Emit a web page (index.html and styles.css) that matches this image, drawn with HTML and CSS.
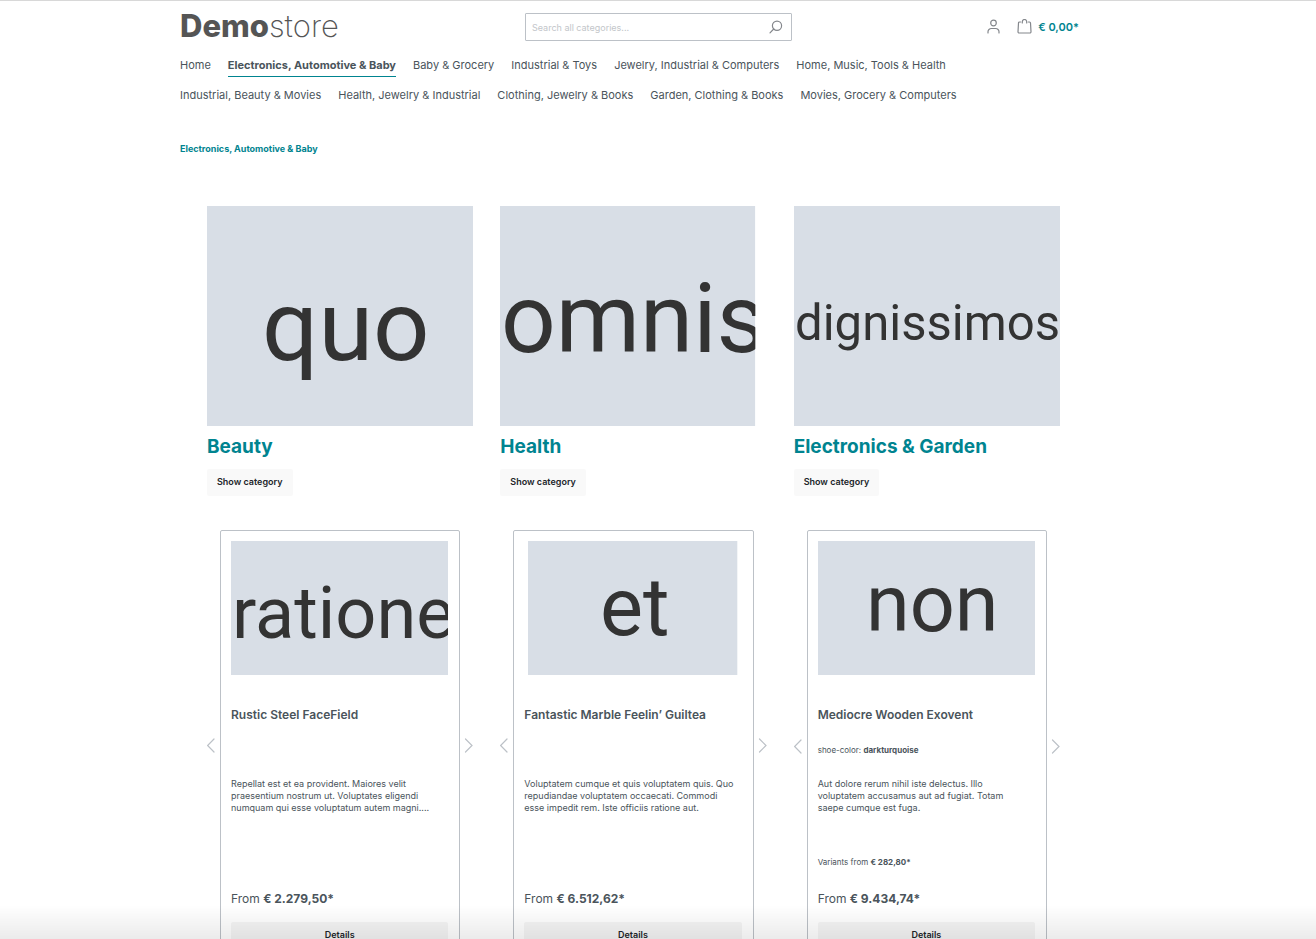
FILE: index.html
```html
<!DOCTYPE html>
<html lang="en">
<head>
<meta charset="utf-8">
<title>Demostore</title>
<link rel="stylesheet" href="styles.css">
</head>
<body>
<div class="page">
  <header class="header">
    <a class="logo" href="#"><b>Demo</b>store</a>
    <form class="search">
      <input class="search-input" type="search" placeholder="Search all categories..." aria-label="Search all categories">
      <button class="search-button" type="button" aria-label="Search">
        <svg width="14" height="14" viewBox="0 0 14 14"><circle cx="8" cy="5.7" r="4.6"/><path d="M4.7 9 1 12.8"/></svg>
      </button>
    </form>
    <div class="actions">
      <button class="icon-button" type="button" aria-label="Your account">
        <svg width="13" height="15" viewBox="0 0 13 15"><circle cx="6.5" cy="4" r="2.800"/><path d="M1 14v-1.200A3.300 3.300 0 0 1 4.300 9.500h4.400A3.300 3.300 0 0 1 12 12.800V14"/></svg>
      </button>
      <a class="cart" href="#">
        <svg width="15" height="15" viewBox="0 0 15 15"><path d="M3.600 3H2.500a1 1 0 0 0-1 1L1 12.700a1.200 1.200 0 0 0 1.200 1.300h10.600a1.200 1.200 0 0 0 1.200-1.300L13.500 4a1 1 0 0 0-1-1h-1.100M5.300 4V2.700a2.200 2.200 0 0 1 4.400 0V4"/></svg>
        <span>€ 0,00*</span>
      </a>
    </div>
  </header>

  <nav class="nav" aria-label="Categories">
    <a href="#">Home</a>
    <a class="active" href="#">Electronics, Automotive &amp; Baby</a>
    <a href="#">Baby &amp; Grocery</a>
    <a href="#">Industrial &amp; Toys</a>
    <a href="#">Jewelry, Industrial &amp; Computers</a>
    <a href="#">Home, Music, Tools &amp; Health</a>
    <a href="#">Industrial, Beauty &amp; Movies</a>
    <a href="#">Health, Jewelry &amp; Industrial</a>
    <a href="#">Clothing, Jewelry &amp; Books</a>
    <a href="#">Garden, Clothing &amp; Books</a>
    <a href="#">Movies, Grocery &amp; Computers</a>
  </nav>

  <a class="breadcrumb" href="#">Electronics, Automotive &amp; Baby</a>

  <main>
    <section class="grid categories">
      <article>
        <svg class="picture" viewBox="0 0 266 220"><rect width="266" height="220"/><text x="55" y="154" font-size="99">quo</text></svg>
        <h2><a href="#">Beauty</a></h2>
        <button class="button" type="button">Show category</button>
      </article>
      <article>
        <svg class="picture" viewBox="0 0 266 220"><svg width="255" height="220"><rect width="255" height="220"/><text x="1" y="146" font-size="96">omnis</text></svg></svg>
        <h2><a href="#">Health</a></h2>
        <button class="button" type="button">Show category</button>
      </article>
      <article>
        <svg class="picture" viewBox="0 0 266 220"><rect width="266" height="220"/><text x="1" y="134" font-size="49">dignissimos</text></svg>
        <h2><a href="#">Electronics &amp; Garden</a></h2>
        <button class="button" type="button">Show category</button>
      </article>
    </section>

    <section class="grid products">
      <div class="slider">
        <button class="arrow" type="button" aria-label="Previous"><svg width="9" height="15" viewBox="0 0 9 15"><path d="M7 1 .6 7.500 7 14"/></svg></button>
        <article class="card">
          <svg class="picture" viewBox="0 0 217 134"><rect width="217" height="134"/><text x="1" y="97" font-size="72">ratione</text></svg>
          <h3>Rustic Steel FaceField</h3>
          <p class="variant"></p>
          <p class="description">Repellat est et ea provident. Maiores velit<br>praesentium nostrum ut. Voluptates eligendi<br>numquam qui esse voluptatum autem magni....</p>
          <p class="from"></p>
          <p class="price">From <b>€ 2.279,50*</b></p>
          <button class="button details" type="button">Details</button>
        </article>
        <button class="arrow next" type="button" aria-label="Next"><svg width="9" height="15" viewBox="0 0 9 15"><path d="m1.500 1 6.500 6.500L1.500 14"/></svg></button>
      </div>
      <div class="slider">
        <button class="arrow" type="button" aria-label="Previous"><svg width="9" height="15" viewBox="0 0 9 15"><path d="M7 1 .6 7.500 7 14"/></svg></button>
        <article class="card">
          <svg class="picture" viewBox="0 0 217 134"><rect x="4" width="209" height="134"/><text x="76" y="94" font-size="81">et</text></svg>
          <h3>Fantastic Marble Feelin’ Guiltea</h3>
          <p class="variant"></p>
          <p class="description">Voluptatem cumque et quis voluptatem quis. Quo<br>repudiandae voluptatem occaecati. Commodi<br>esse impedit rem. Iste officiis ratione aut.</p>
          <p class="from"></p>
          <p class="price">From <b>€ 6.512,62*</b></p>
          <button class="button details" type="button">Details</button>
        </article>
        <button class="arrow next" type="button" aria-label="Next"><svg width="9" height="15" viewBox="0 0 9 15"><path d="m1.500 1 6.500 6.500L1.500 14"/></svg></button>
      </div>
      <div class="slider slider-tall">
        <button class="arrow" type="button" aria-label="Previous"><svg width="9" height="15" viewBox="0 0 9 15"><path d="M7 1 .6 7.500 7 14"/></svg></button>
        <article class="card">
          <svg class="picture" viewBox="0 0 217 134"><rect width="217" height="134"/><text x="48" y="90" font-size="79">non</text></svg>
          <h3>Mediocre Wooden Exovent</h3>
          <p class="variant">shoe-color: <b>darkturquoise</b></p>
          <p class="description">Aut dolore rerum nihil iste delectus. Illo<br>voluptatem accusamus aut ad fugiat. Totam<br>saepe cumque est fuga.</p>
          <p class="from">Variants from <b>€ 282,80*</b></p>
          <p class="price">From <b>€ 9.434,74*</b></p>
          <button class="button details" type="button">Details</button>
        </article>
        <button class="arrow next" type="button" aria-label="Next"><svg width="9" height="15" viewBox="0 0 9 15"><path d="m1.500 1 6.500 6.500L1.500 14"/></svg></button>
      </div>
    </section>
  </main>
</div>
<div class="bottom-shade"></div>
</body>
</html>
```
FILE: styles.css
```css
* {
  box-sizing: border-box;
}

html {
  scrollbar-width: none;
}

body {
  margin: 0;
  padding-right: 49px;
  height: 100vh;
  overflow: hidden;
  background: #fff;
  border-top: 1px solid #d8d8d8;
  color: #4a545b;
  font-family: Inter, "Liberation Sans", sans-serif;
  font-size: 11px;
}

a {
  color: inherit;
  text-decoration: none;
}

button {
  padding: 0;
  border: 0;
  background: none;
  font-family: inherit;
}

h2,
h3,
p {
  margin: 0;
}

svg {
  display: block;
  fill: none;
  stroke: #84878c;
  stroke-width: 1.2;
  stroke-linecap: round;
}

.page {
  max-width: 907px;
  margin: 0 auto;
}

.header {
  display: grid;
  grid-template-columns: 345px 267px 1fr;
  align-items: center;
  padding-top: 12px;
}

.logo {
  color: #555;
  font-size: 31px;
  font-weight: 200;
  line-height: 26px;
  height: 32px;
}

.logo b {
  font-weight: 800;
}

.search {
  display: flex;
  height: 28px;
  margin-bottom: 4px;
  border: 1px solid #bcc1c7;
  border-radius: 1px;
}

.search-input {
  flex: 1;
  min-width: 0;
  padding: 1px 6px;
  border: 0;
  outline: 0;
  background: none;
  font-family: inherit;
  font-size: 9px;
}

.search-input::placeholder {
  color: #c3c6ca;
}

.search-button {
  padding: 0 8px;
}

.actions {
  display: flex;
  justify-content: flex-end;
  gap: 17px;
  padding: 0 8px 5px 0;
}

.cart {
  display: flex;
  align-items: center;
  gap: 6px;
  color: #008490;
  font-weight: 600;
  line-height: 14px;
}

.nav {
  display: flex;
  flex-wrap: wrap;
  column-gap: 17px;
  row-gap: 6px;
  padding: 8px 100px 0 0;
}

.nav a {
  height: 24px;
  line-height: 24px;
}

.nav .active {
  border-bottom: 1px solid #008490;
  font-weight: 700;
}

.breadcrumb {
  display: block;
  margin-top: 34px;
  color: #008490;
  font-size: 9px;
  font-weight: 700;
  line-height: 16px;
}

.grid {
  display: grid;
  grid-template-columns: repeat(3, 1fr);
  gap: 27px;
  padding: 0 27px;
}

.categories {
  margin-top: 49px;
}

.picture {
  width: 100%;
  height: auto;
}

.picture svg {
  overflow: hidden;
}

.picture rect {
  fill: #d8dee6;
  stroke: none;
}

.picture text {
  fill: #333;
  stroke: none;
  font-family: Roboto, sans-serif;
}

h2 {
  margin: 6px 0 8px;
  color: #008490;
  font-size: 19px;
  font-weight: 700;
  line-height: 29px;
}

.button {
  height: 27px;
  padding: 0 10px 2px;
  border-radius: 2px;
  background: #f9f9f9;
  color: #212529;
  font-size: 9px;
  font-weight: 600;
}

.products {
  align-items: start;
  margin-top: 34px;
}

.slider {
  display: grid;
  grid-template-columns: 13px minmax(0, 1fr) 13px;
}

.slider-tall {
  grid-template-rows: 432px;
}

.arrow {
  display: flex;
  align-items: center;
}

.arrow path {
  stroke: #bcc1c7;
}

.next {
  justify-content: flex-end;
}

.card {
  display: flex;
  flex-direction: column;
  padding: 10px 11px 10px 10px;
  border: 1px solid #bcc1c7;
  border-radius: 2px;
}

.card h3 {
  margin: 31px 0 20px;
  font-size: 12px;
  font-weight: 600;
  line-height: 18px;
}

.variant {
  height: 34px;
  font-size: 8px;
  line-height: 12px;
}

.description {
  height: 78px;
  font-size: 9px;
  line-height: 12px;
}

.from {
  height: 28px;
  font-size: 8px;
  line-height: 12px;
}

.price {
  margin: 6px 0 14px;
  font-size: 12px;
  line-height: 18px;
}

.details {
  background: #f5f5f5;
}

.bottom-shade {
  position: fixed;
  inset: auto 0 0;
  height: 34px;
  background: linear-gradient(transparent, rgba(0, 0, 0, 0.08));
  pointer-events: none;
}
```
